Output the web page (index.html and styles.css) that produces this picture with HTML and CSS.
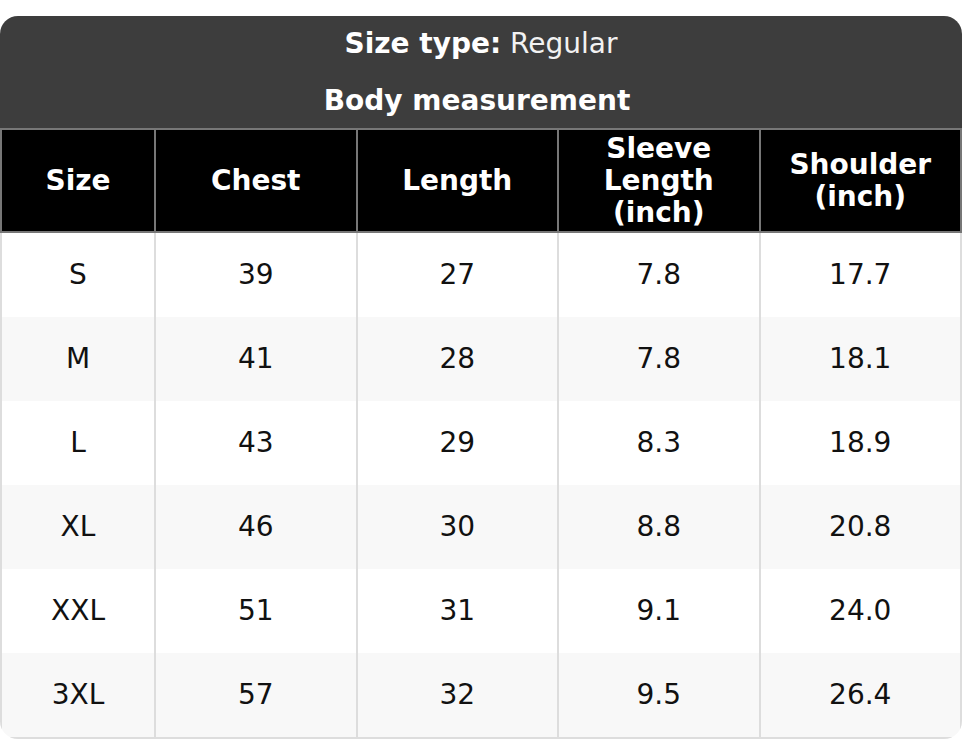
FILE: index.html
```html
<!DOCTYPE html>
<html lang="en">
<head>
<meta charset="utf-8">
<title>Size chart</title>
<link rel="stylesheet" href="styles.css">
</head>
<body>
<div class="chart">
  <div class="chart-head">
    <div class="chart-line"><strong>Size type:</strong>&nbsp;<span class="type">Regular</span></div>
    <div class="chart-line chart-sub"><strong>Body measurement</strong></div>
  </div>
  <table class="sizes">
    <colgroup>
      <col class="c-size">
      <col class="c-val">
      <col class="c-val">
      <col class="c-val">
      <col class="c-val">
    </colgroup>
    <thead>
      <tr>
        <th>Size</th>
        <th>Chest</th>
        <th>Length</th>
        <th>Sleeve Length (inch)</th>
        <th>Shoulder (inch)</th>
      </tr>
    </thead>
    <tbody>
      <tr><td>S</td><td>39</td><td>27</td><td>7.8</td><td>17.7</td></tr>
      <tr><td>M</td><td>41</td><td>28</td><td>7.8</td><td>18.1</td></tr>
      <tr><td>L</td><td>43</td><td>29</td><td>8.3</td><td>18.9</td></tr>
      <tr><td>XL</td><td>46</td><td>30</td><td>8.8</td><td>20.8</td></tr>
      <tr><td>XXL</td><td>51</td><td>31</td><td>9.1</td><td>24.0</td></tr>
      <tr><td>3XL</td><td>57</td><td>32</td><td>9.5</td><td>26.4</td></tr>
    </tbody>
  </table>
</div>
</body>
</html>
```
FILE: styles.css
```css
html, body {
  margin: 0;
  padding: 0;
  background: #ffffff;
}

body {
  font-family: "DejaVu Sans", "Noto Sans", sans-serif;
  color: #111111;
}

.chart {
  margin-top: 16px;
  width: 962px;
  border-radius: 18px;
  overflow: hidden;
  background: #ffffff;
}

.chart-head {
  background: #3d3d3d;
  color: #ffffff;
  font-size: 28px;
}

.chart-line {
  height: 56px;
  display: flex;
  align-items: center;
  justify-content: center;
  white-space: nowrap;
}

.chart-line:first-child {
  padding-bottom: 2px;
  height: 54px;
}

.chart-sub {
  padding-right: 8px;
}

.chart-line strong {
  font-weight: bold;
}

.type {
  font-weight: normal;
  color: #f2f2f2;
}

.sizes {
  width: 100%;
  border-collapse: collapse;
  table-layout: fixed;
  font-size: 28px;
}

.c-size {
  width: 154px;
}

.sizes th {
  background: #000000;
  color: #ffffff;
  font-weight: bold;
  border: 2px solid #777777;
  height: 101px;
  line-height: 32px;
  padding: 0 10px;
  text-align: center;
  vertical-align: middle;
}

.sizes td {
  height: 84px;
  padding: 0 8px;
  text-align: center;
  vertical-align: middle;
  border-left: 2px solid #dddddd;
  border-right: 2px solid #dddddd;
  line-height: 32px;
}

.sizes tbody tr:nth-child(even) td {
  background: #f8f8f8;
}

.sizes tbody tr:last-child td {
  border-bottom: 2px solid #dddddd;
}
```
